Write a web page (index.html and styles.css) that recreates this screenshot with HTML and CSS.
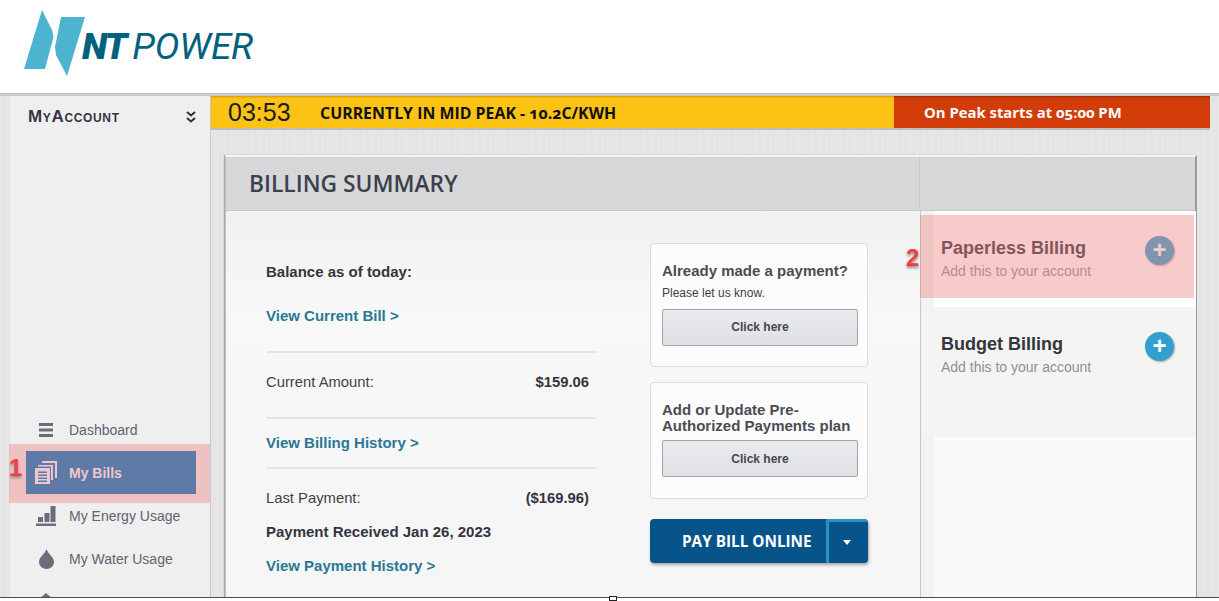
FILE: index.html
```html
<!DOCTYPE html>
<html lang="en">
<head>
<meta charset="utf-8">
<title>NT Power - Billing Summary</title>
<link rel="stylesheet" href="styles.css">
</head>
<body>
<div class="page">
  <header class="site-header">
    <svg class="logo-mark" width="61" height="66" viewBox="0 0 61 66" aria-hidden="true">
      <path d="M18 0 L28 20 L29.500 27 L21 59 L0 59 Z" fill="#4db4cf"/>
      <path d="M37 7 L61 7 L43 66 L32 45 L31 37 Z" fill="#4db4cf"/>
    </svg>
    <div class="logo-text"><b>NT</b><span>POWER</span></div>
  </header>
  <div class="main">
    <aside class="sidebar">
      <div class="account-row">
        <span class="account-title">MyAccount</span>
        <svg width="10" height="12" viewBox="0 0 10 12" aria-hidden="true"><path d="M1 1 L5 4.500 L9 1 M1 7 L5 10.500 L9 7" fill="none" stroke="#2e3038" stroke-width="2"/></svg>
      </div>
      <nav class="nav">
        <a class="nav-item">
          <span class="icon-box"><svg width="14" height="14" viewBox="0 0 14 14" aria-hidden="true"><path d="M0 0h14v3H0zM0 5.500h14v3H0zM0 11h14v3H0z" fill="#6b6e78"/></svg></span>
          <span>Dashboard</span>
        </a>
        <a class="nav-item active">
          <span class="icon-box"><svg width="22" height="23" viewBox="0 0 22 23" aria-hidden="true"><path d="M7 0h15v17h-2V2H7zM3 4h15v1.600H3z" fill="#ecc8ce"/><path d="M16 4h2v15h-2z" fill="#ecc8ce"/><path d="M0 7h15v16H0z" fill="#ecc8ce"/><path d="M3 10.500h9v1.500H3zM3 13.500h9v1.500H3zM3 16.500h9v1.500H3zM3 19.500h9V21H3z" fill="#5f7aa6"/></svg></span>
          <span>My Bills</span>
        </a>
        <a class="nav-item">
          <span class="icon-box"><svg width="20" height="20" viewBox="0 0 20 20" aria-hidden="true"><path d="M2 11h5v5H2zM8.500 7h5v9h-5zM14.500 0h5v16h-5zM0 17.500h20V20H0z" fill="#6b6e78"/></svg></span>
          <span>My Energy Usage</span>
        </a>
        <a class="nav-item">
          <span class="icon-box"><svg width="15" height="20" viewBox="0 0 15 20" aria-hidden="true"><path d="M7.500 0 C9 5 15 8 15 13 A7.500 7 0 0 1 0 13 C0 8 6 5 7.500 0Z" fill="#6b6e78"/></svg></span>
          <span>My Water Usage</span>
        </a>
        <a class="nav-item home">
          <span class="icon-box"><svg width="16" height="16" viewBox="0 0 16 16" aria-hidden="true"><path d="M8 0 L16 7 V16 H0 V7Z" fill="#6b6e78"/></svg></span>
        </a>
      </nav>
    </aside>
    <main class="content">
      <div class="peak-bar">
        <div class="peak-now"><span class="clock">03:53</span><span class="peak-label">CURRENTLY IN MID PEAK - 10.2C/KWH</span></div>
        <div class="peak-next">On Peak starts at 05:00 PM</div>
      </div>
      <section class="card">
        <div class="card-head">
          <h1>BILLING SUMMARY</h1>
          <div class="head-side"></div>
        </div>
        <div class="card-body">
          <div class="summary">
            <div class="group first">
              <p class="strong">Balance as of today:</p>
              <a class="link">View Current Bill &gt;</a>
            </div>
            <div class="group amount">
              <div class="row"><span>Current Amount:</span><b>$159.06</b></div>
            </div>
            <div class="group history">
              <a class="link">View Billing History &gt;</a>
            </div>
            <div class="group last">
              <div class="row"><span>Last Payment:</span><b>($169.96)</b></div>
              <p class="strong received">Payment Received Jan 26, 2023</p>
              <a class="link">View Payment History &gt;</a>
            </div>
          </div>
          <div class="actions">
            <div class="box">
              <h2>Already made a payment?</h2>
              <p>Please let us know.</p>
              <button class="btn" type="button">Click here</button>
            </div>
            <div class="box second">
              <h2>Add or Update Pre-Authorized Payments plan</h2>
              <button class="btn" type="button">Click here</button>
            </div>
            <div class="pay">
              <span class="pay-main">PAY BILL ONLINE</span>
              <span class="pay-drop"><i class="caret"></i></span>
            </div>
          </div>
          <div class="side">
            <div class="option top">
              <div><h3>Paperless Billing</h3><p>Add this to your account</p></div>
              <span class="plus">+</span>
            </div>
            <div class="option grey">
              <div><h3>Budget Billing</h3><p>Add this to your account</p></div>
              <span class="plus">+</span>
            </div>
          </div>
        </div>
      </section>
    </main>
  </div>
  <div class="mark mark-one"></div>
  <div class="mark mark-two"></div>
  <span class="num num-one">1</span>
  <span class="num num-two">2</span>
  <div class="crop-line"></div>
  <div class="crop-handle"></div>
</div>
</body>
</html>
```

FILE: styles.css
```css
* { box-sizing: border-box; }
html, body { margin: 0; height: 100%; }
body { font-family: "Liberation Sans", Arial, sans-serif; color: #33353f; background: #e6e6e6; overflow: hidden; }
h1, h2, h3, p { margin: 0; }
.page { position: relative; width: 1219px; height: 601px; overflow: hidden; background-color: #e5e5e5; background-image: repeating-linear-gradient(90deg, rgba(255,255,255,.12) 0 1px, transparent 1px 3px, rgba(0,0,0,.012) 3px 4px, transparent 4px 7px); }

.site-header { height: 96px; background: #fff; border-bottom: 3px solid #c8c8c8; padding: 10px 0 0 24px; display: flex; align-items: flex-start; }
.logo-mark { flex: none; margin-right: -3px; }
.logo-text { margin-top: 18px; font-family: Roboto, sans-serif; font-style: italic; font-size: 37px; line-height: 38px; color: #00617f; display: flex; gap: 7px; }
.logo-text b { font-weight: 900; letter-spacing: -2px; }
.logo-text span { font-weight: 400; letter-spacing: -.2px; }

.main { display: flex; height: 505px; padding-left: 10px; }
.sidebar { width: 201px; flex: none; background: #efefef; border-right: 1px solid #c9c9c9; display: flex; flex-direction: column; }
.account-row { display: flex; justify-content: space-between; align-items: center; height: 42px; padding: 0 14px 0 18px; }
.account-title { font-variant: small-caps; font-weight: 700; font-size: 17px; color: #33353f; letter-spacing: .65px; }
.nav { margin-top: auto; display: flex; flex-direction: column; }
.nav-item { display: flex; align-items: center; height: 43px; margin: 0 14px 0 16px; font-size: 14px; color: #5f6270; }
.icon-box { flex: none; width: 40px; margin-right: 3px; display: flex; justify-content: center; }
.active { position: relative; z-index: 2; background: #5f7aa6; color: #f2c6cc; font-weight: 700; }
.home { height: 21px; align-items: flex-start; padding-top: 13px; }

.content { flex: 1; min-width: 0; padding-right: 9px; }
.peak-bar { display: flex; height: 34px; border-bottom: 2px solid #bdbdbd; font-family: "Open Sans", sans-serif; font-feature-settings: "onum"; }
.peak-now { width: 683px; background: #fcc314; box-shadow: inset 0 2px 2px -1px rgba(120,70,0,.35); display: flex; align-items: center; padding-left: 17px; }
.clock { font-family: "Liberation Sans", sans-serif; font-size: 25px; color: #1c1c1c; width: 92px; }
.peak-label { font-size: 15.900px; font-weight: 700; color: #111; padding-top: 2px; }
.peak-next { flex: 1; background: #d13c08; box-shadow: inset 0 2px 2px -1px rgba(80,20,0,.5); color: #fff; font-size: 14.850px; font-weight: 700; display: flex; align-items: center; padding-left: 30px; }

.card { margin: 25px 0 0 14px; width: 972px; height: 460px; background: linear-gradient(#f9f9f8 0, #f1f1f1 60px, #f8f8f8 160px, #f5f5f5 100%); border: 1px solid #bfbfbf; border-right: 2px solid #9a9a9a; border-top: 2px solid #f4f4f4; box-shadow: -1px 0 1px #aaa; }
.card-head { height: 54px; background: #d6d7d9; display: flex; justify-content: space-between; border-bottom: 1px solid #c9c9c9; }
.card-head h1 { font-family: "Open Sans", sans-serif; font-size: 22.800px; line-height: 53px; font-weight: 600; color: #3d404c; padding-left: 23px; }
.head-side { width: 276px; border-left: 1px solid #c9cacc; }
.card-body { display: flex; height: 404px; }

.summary { width: 330px; margin-left: 40px; flex: none; font-size: 14.800px; }
.group { border-bottom: 2px solid #e4e4e4; }
.first { height: 142px; padding-top: 52px; }
.first .link { margin-top: 26px; }
.amount { height: 66px; padding-top: 20px; }
.history { height: 50px; padding-top: 15px; }
.last { border-bottom: none; padding-top: 20px; }
.strong { font-size: 15px; font-weight: 700; color: #33353f; line-height: 18px; }
.link { display: block; font-weight: 700; color: #2a7896; line-height: 18px; font-size: 15px; }
.row { display: flex; justify-content: space-between; padding-right: 7px; line-height: 18px; color: #3f414b; }
.row b { color: #33353f; }
.received { margin-top: 16px; }
.last .link { margin-top: 16px; }

.actions { width: 218px; margin-left: 54px; flex: none; padding-top: 32px; }
.box { height: 124px; background: #fcfcfc; border: 1px solid #dcdcdc; border-radius: 4px; padding: 19px 9px 0 11px; color: #46484f; }
.box h2 { font-size: 15px; line-height: 16px; font-weight: 700; color: #4b4c52; }
.box p { font-size: 12px; line-height: 14px; margin-top: 7px; color: #3d3f48; }
.btn { display: block; width: 196px; height: 37px; margin-top: 9px; padding: 0 0 2px; border: 1px solid #a5a5a8; border-radius: 2px; background: linear-gradient(#e9eaed, #e0e1e5); font: 700 12px "Liberation Sans", sans-serif; color: #454653; }
.second { height: 117px; margin-top: 15px; padding-top: 19px; }
.second .btn { margin-top: 6px; padding-bottom: 0; }
.pay { display: flex; height: 44px; margin-top: 20px; background: #07548a; border-radius: 4px; box-shadow: 1px 2px 3px #aaa; overflow: hidden; font-family: "Open Sans", sans-serif; }
.pay-main { width: 176px; padding-left: 32px; line-height: 44px; color: #fff; font-weight: 700; font-size: 15.300px; white-space: nowrap; }
.pay-drop { flex: 1; border-left: 3px solid #2a91c2; border-top: 3px solid #2a91c2; display: flex; align-items: center; justify-content: center; padding: 0 3px 1px 0; }
.caret { width: 0; height: 0; border: 4px solid transparent; border-top: 5px solid #fff; border-bottom: 0; }

.side { flex: none; width: 276px; margin-left: 52px; border-left: 1px solid #c9c9c9; background: linear-gradient(90deg, #f3f3f3 0 13px, #fafafa 13px); }
.option { display: flex; justify-content: space-between; padding: 27px 22px 0 20px; }
.option h3 { font-size: 18px; line-height: 20px; font-weight: 700; color: #33353f; }
.option p { font-size: 14px; line-height: 18px; margin-top: 4px; color: #8d8f96; }
.top { height: 96px; background: #fff; margin-left: 13px; padding-left: 7px; }
.grey { height: 130px; background: #f4f4f2; }
.plus { flex: none; width: 29px; height: 29px; margin-top: -2px; border-radius: 50%; background: #31a0cf; color: #fff; text-align: center; font-size: 24px; line-height: 27px; font-weight: 700; box-shadow: 1px 1px 2px #aaa; }

.mark { position: absolute; z-index: 1; background: rgba(238, 130, 130, .42); }
.mark-one { left: 9px; top: 444px; width: 201px; height: 59px; }
.mark-two { left: 920px; top: 215px; width: 274px; height: 83px; }
.num { position: absolute; z-index: 3; font-weight: 700; font-size: 24px; line-height: 24px; color: #f53c46; text-shadow: 0 2px 3px #888; }
.num-one { left: 9px; top: 456px; }
.num-two { left: 906px; top: 246px; }
.crop-line { position: absolute; z-index: 4; left: 0; right: 0; top: 597px; height: 4px; background: #fff; border-top: 1px solid #4a4d58; }
.crop-handle { position: absolute; z-index: 5; left: 609px; top: 596px; width: 8px; height: 5px; background: #fff; border: 1px solid #222; }
```
